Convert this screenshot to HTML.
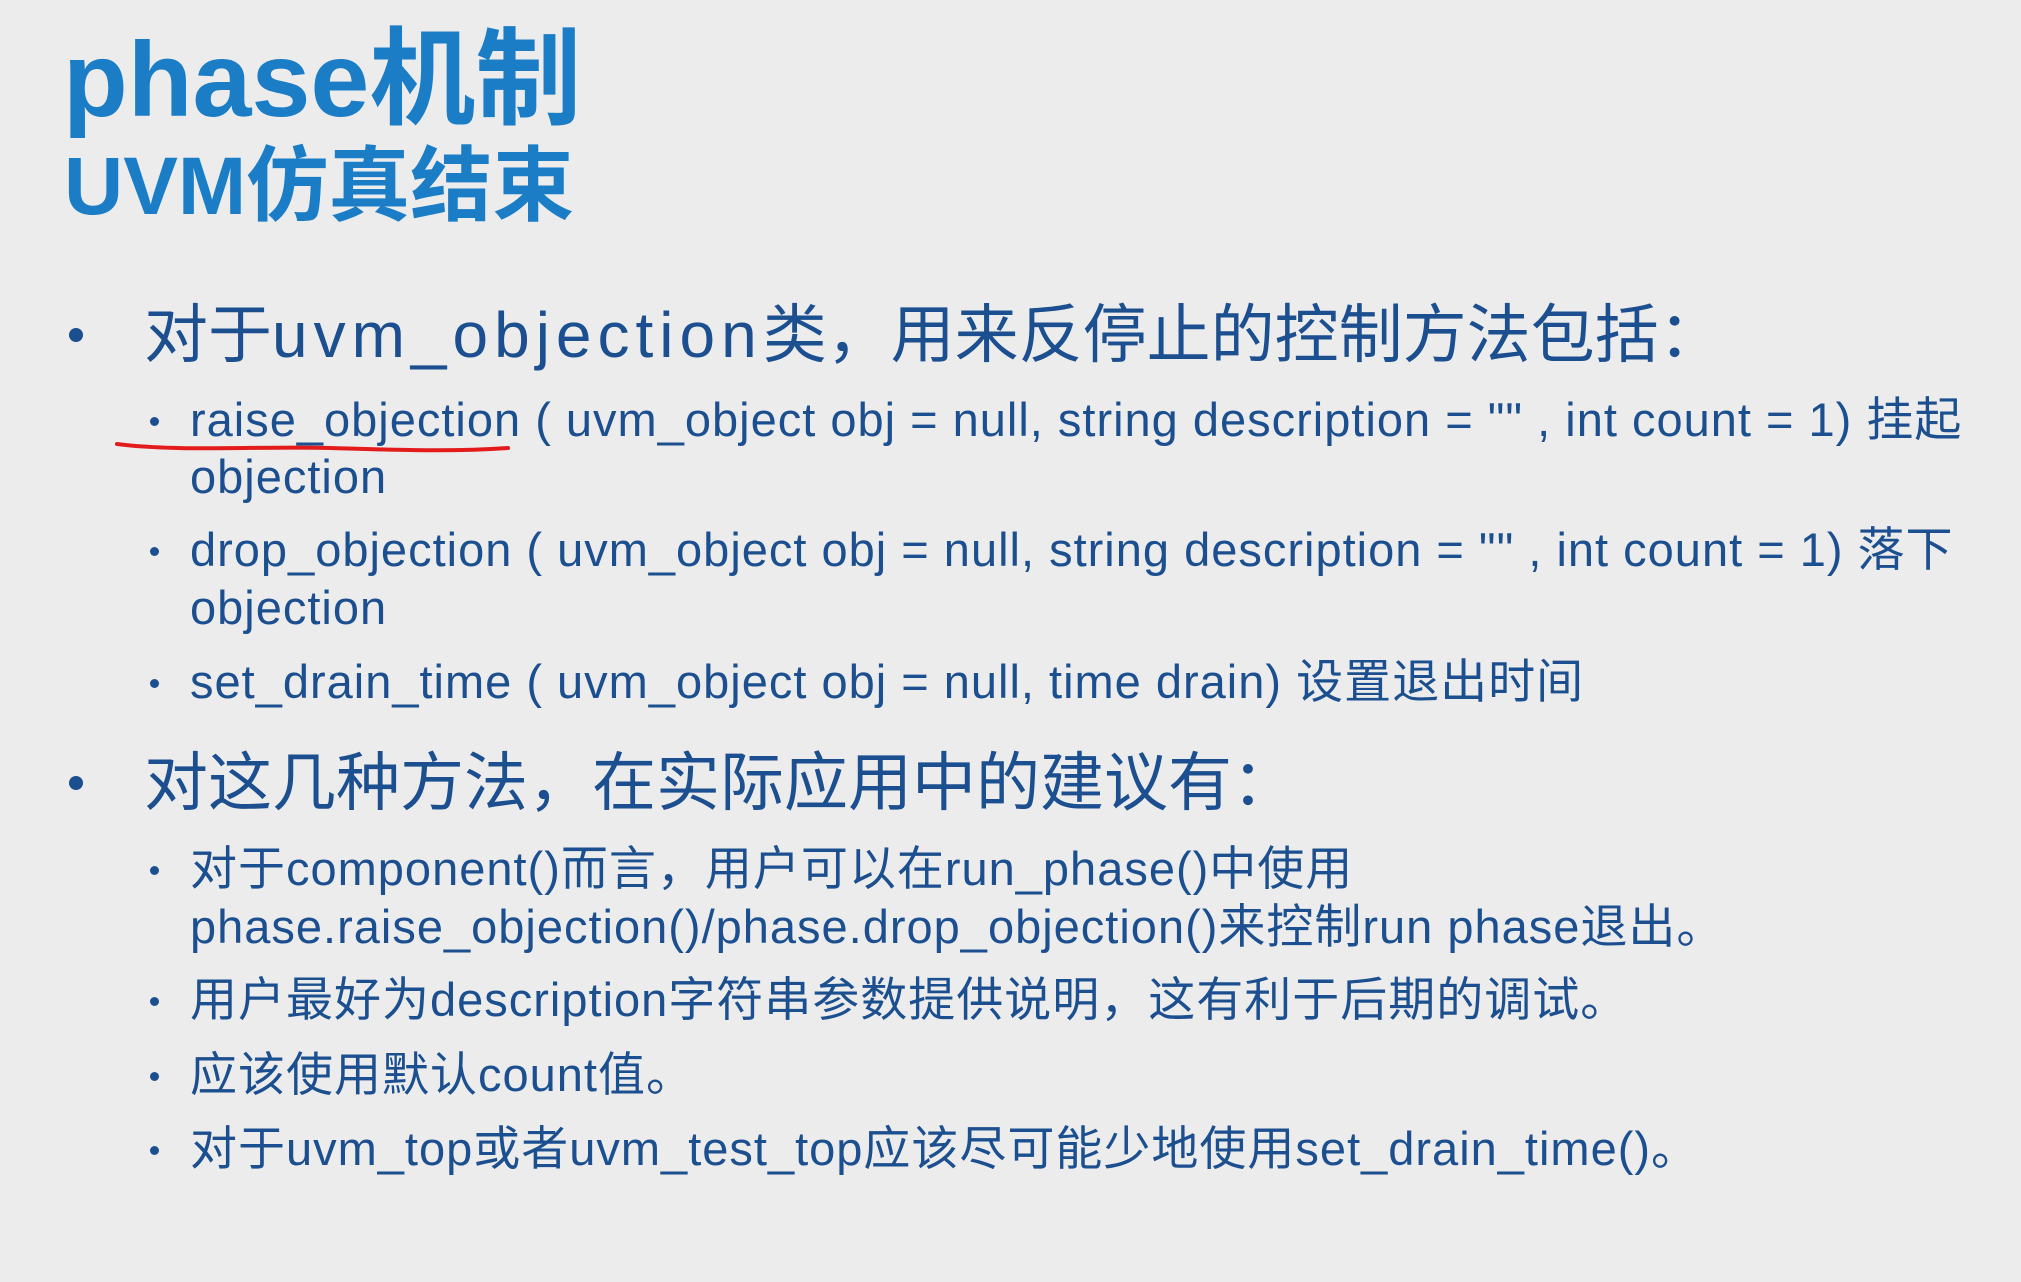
<!DOCTYPE html>
<html><head><meta charset="utf-8"><style>
html,body{margin:0;padding:0}
body{width:2021px;height:1282px;background:#ececec;position:relative;overflow:hidden;font-family:"Liberation Sans","Noto Sans CJK SC",sans-serif;}
.t{position:absolute;white-space:nowrap;}
.h1{left:63px;top:20px;font-size:106px;line-height:120px;color:#1a7dc6;font-weight:bold;}
.h2{left:64px;top:142px;font-size:82px;line-height:90px;color:#1a7dc6;font-weight:bold;}
.l1{font-size:64px;line-height:70px;color:#1c4f8f;left:144px;}
.l1 .e{letter-spacing:6px}
.l2{font-size:47px;line-height:60px;color:#1c4f8f;left:190px;letter-spacing:1px}
.b1{position:absolute;width:14px;height:14px;border-radius:50%;background:#1c4f8f;left:69px}
.b2{position:absolute;width:9px;height:9px;border-radius:50%;background:#1c4f8f;left:150px}
</style></head><body>
<div class="t h1">phase机制</div>
<div class="t h2">UVM仿真结束</div>

<div class="b1" style="top:328px"></div>
<div class="t l1" style="top:300px">对于<span class="e">uvm_objection</span>类，用来反停止的控制方法包括：</div>

<div class="b2" style="top:417px"></div>
<div class="t l2" style="top:390px">raise_objection ( uvm_object obj = null, string description = "" , int count = 1) 挂起</div>
<div class="t l2" style="top:447px">objection</div>
<svg style="position:absolute;left:0;top:0" width="2021" height="1282"><path d="M117 444 C180 452 260 446 330 448 C400 450 450 452 508 448" stroke="#e31b1b" stroke-width="4" fill="none" stroke-linecap="round"/></svg>

<div class="b2" style="top:547px"></div>
<div class="t l2" style="top:520px">drop_objection ( uvm_object obj = null, string description = "" , int count = 1) 落下</div>
<div class="t l2" style="top:578px">objection</div>

<div class="b2" style="top:679px"></div>
<div class="t l2" style="top:652px">set_drain_time ( uvm_object obj = null, time drain) 设置退出时间</div>

<div class="b1" style="top:776px"></div>
<div class="t l1" style="top:748px">对这几种方法，在实际应用中的建议有：</div>

<div class="b2" style="top:866px"></div>
<div class="t l2" style="top:839px">对于component()而言，用户可以在run_phase()中使用</div>
<div class="t l2" style="top:897px">phase.raise_objection()/phase.drop_objection()来控制run phase退出。</div>

<div class="b2" style="top:997px"></div>
<div class="t l2" style="top:970px">用户最好为description字符串参数提供说明，这有利于后期的调试。</div>

<div class="b2" style="top:1072px"></div>
<div class="t l2" style="top:1045px">应该使用默认count值。</div>

<div class="b2" style="top:1146px"></div>
<div class="t l2" style="top:1119px">对于uvm_top或者uvm_test_top应该尽可能少地使用set_drain_time()。</div>
</body></html>
